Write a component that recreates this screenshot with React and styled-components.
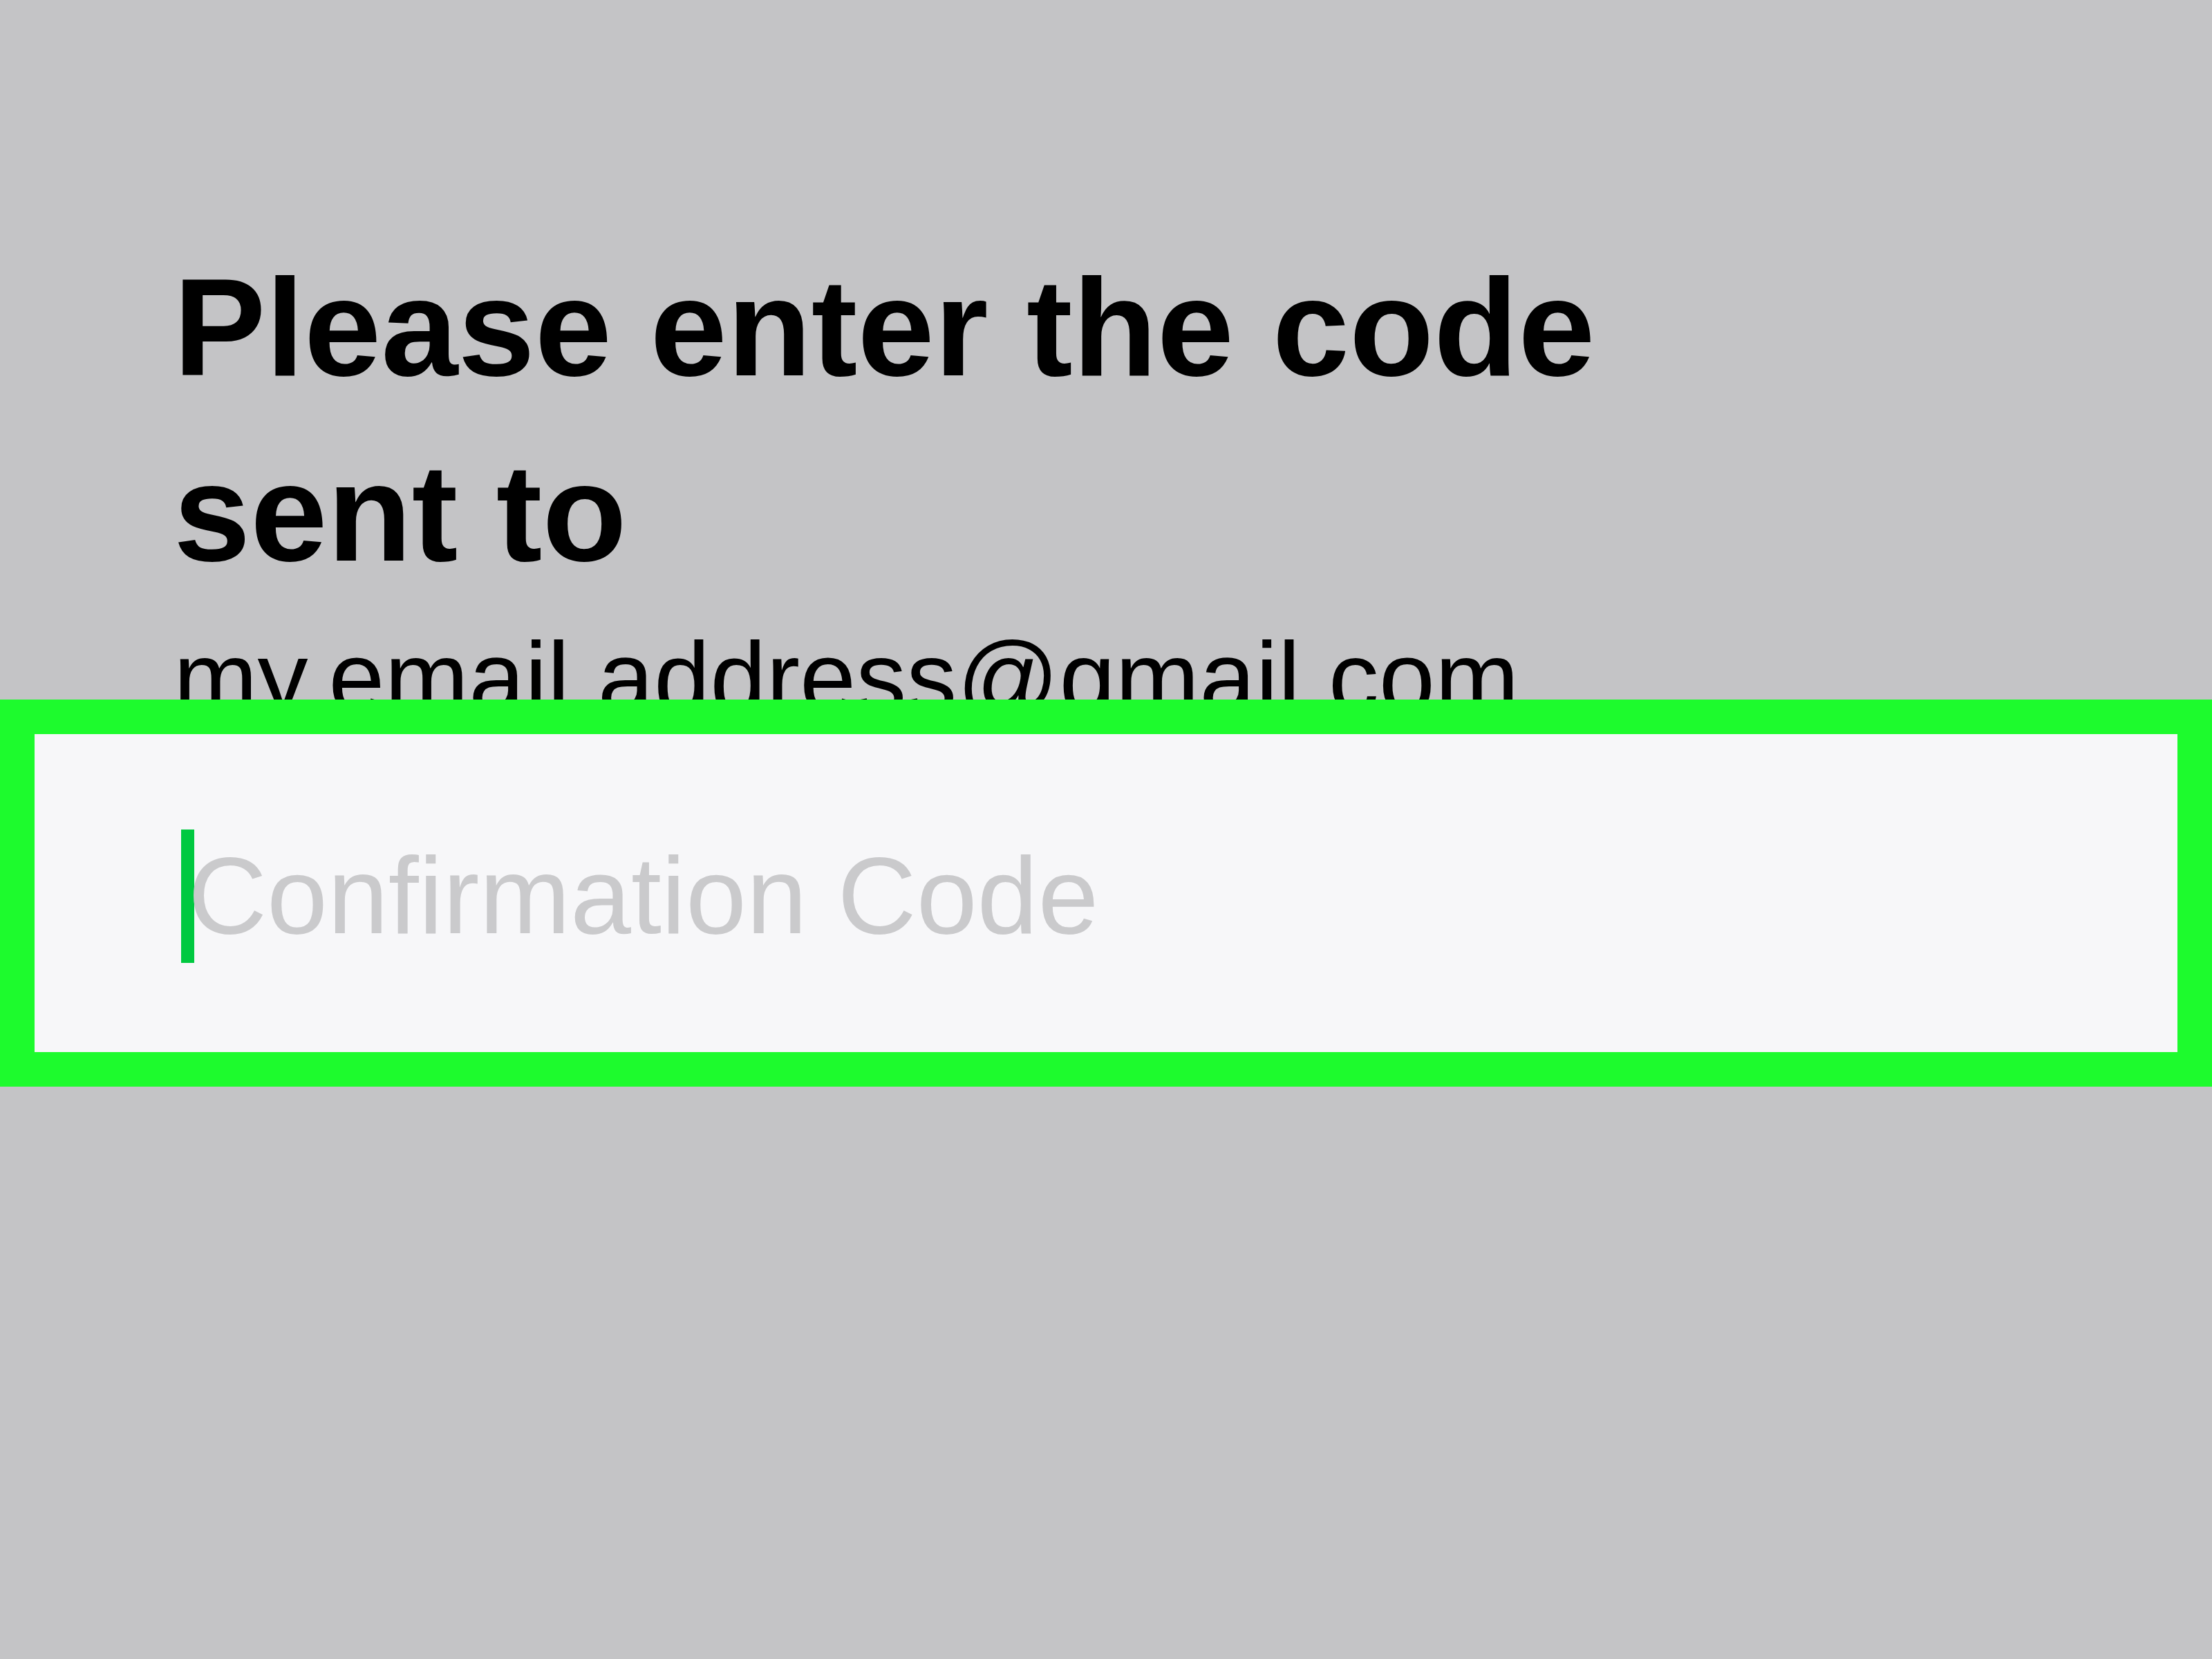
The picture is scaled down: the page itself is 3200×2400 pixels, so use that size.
import styled, { createGlobalStyle } from "styled-components";

const GlobalStyle = createGlobalStyle`
  html, body {
    margin: 0;
    padding: 0;
    background-color: #c4c4c6;
  }
  body {
    font-family: "Liberation Sans", Arial, sans-serif;
  }
`;

const Page = styled.div`
  min-height: 100vh;
  padding-top: 340px;
  box-sizing: border-box;
  background-color: #c4c4c6;
  overflow: hidden;
`;

const Intro = styled.div`
  padding-left: 251px;
`;

const Heading = styled.h1`
  margin: 0;
  max-width: 2200px;
  font-size: 200px;
  font-weight: bold;
  line-height: 268px;
  color: #000;
`;

const Email = styled.p`
  margin: 25px 0 0;
  font-size: 146px;
  line-height: 160px;
  color: #000;
`;

const CodeField = styled.div`
  position: relative;
  margin-top: -49px;
  height: 460px;
  border: 50px solid #1dfb2d;
  background-color: #f7f7f9;
  display: flex;
  align-items: center;
  padding-left: 212px;
`;

const Caret = styled.span`
  flex: none;
  width: 19px;
  height: 193px;
  margin-top: 9px;
  background-color: #00c940;
`;

const Placeholder = styled.span`
  margin-left: -9px;
  padding-top: 6px;
  font-size: 158px;
  line-height: 1;
  color: #cacacc;
  white-space: nowrap;
`;

const App = () => {
  return (
    <>
      <GlobalStyle />
      <Page>
        <Intro>
          <Heading>Please enter the code sent to</Heading>
          <Email>my.email.address@gmail.com</Email>
        </Intro>
        <CodeField>
          <Caret />
          <Placeholder>Confirmation Code</Placeholder>
        </CodeField>
      </Page>
    </>
  );
};

export default App;
